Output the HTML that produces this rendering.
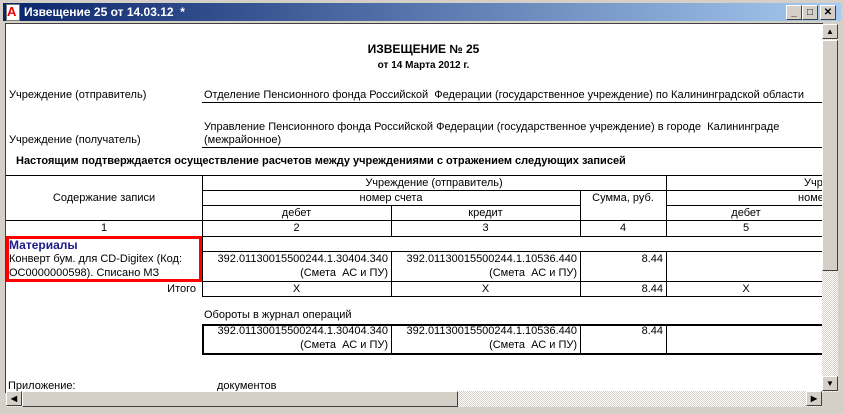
<!DOCTYPE html>
<html><head><meta charset="utf-8"><style>
body{margin:0;width:844px;height:414px;overflow:hidden;background:#D4D0C8;font-family:"Liberation Sans",Arial,sans-serif;font-size:11px;color:#000;position:relative}
.a{position:absolute;white-space:nowrap}
.title{position:absolute;left:3px;top:3px;width:838px;height:18px;background:linear-gradient(90deg,#0A246A,#A6CAF0)}
.content{position:absolute;left:5px;top:23px;width:817px;height:369px;background:#fff;border-left:1px solid #404040;border-top:1px solid #404040;overflow:hidden}
.c{position:absolute;text-align:center}
.r{position:absolute;text-align:right}
.hl{position:absolute;height:1px;background:#000}
.vl{position:absolute;width:1px;background:#000}
.btn{position:absolute;width:14px;height:13px;background:#D4D0C8;border:1px solid;border-color:#fff #404040 #404040 #fff;font-size:10px;text-align:center;line-height:13px;font-weight:bold}
.sb{position:absolute;background:repeating-conic-gradient(#D4D0C8 0 25%,#fff 0 50%) 0 0/2px 2px}
.thumb{position:absolute;background:#D4D0C8;border:1px solid;border-color:#fff #404040 #404040 #fff}
</style></head><body>
<div class="title"></div>
<div class="a" style="left:6px;top:4px;width:12px;height:15px;background:#fff;border:1px solid #777"><span style="color:#e00;font-weight:bold;font-size:13px;position:absolute;left:0;top:-1px">A</span></div>
<div class="a" style="left:24px;top:5px;color:#fff;font-weight:bold;font-size:12px">Извещение 25 от 14.03.12 &nbsp;*</div>
<div class="btn" style="left:786px;top:5px">_</div>
<div class="btn" style="left:802px;top:5px">□</div>
<div class="btn" style="left:820px;top:5px">✕</div>

<div class="content">
<div class="c" style="left:0;width:835px;top:18px;font-weight:bold;font-size:12px">ИЗВЕЩЕНИЕ № 25</div>
<div class="c" style="left:0;width:835px;top:36px;font-weight:bold;font-size:10px">от 14 Марта 2012 г.</div>
<div class="a" style="left:3px;top:65px">Учреждение (отправитель)</div>
<div class="a" style="left:198px;top:65px">Отделение Пенсионного фонда Российской &nbsp;Федерации (государственное учреждение) по Калининградской области</div>
<div class="hl" style="left:196px;width:620px;top:78px"></div>
<div class="a" style="left:198px;top:97px">Управление Пенсионного фонда Российской Федерации (государственное учреждение) в городе &nbsp;Калининграде</div>
<div class="a" style="left:198px;top:110px">(межрайонное)</div>
<div class="a" style="left:3px;top:110px">Учреждение (получатель)</div>
<div class="hl" style="left:196px;width:620px;top:123px"></div>
<div class="a" style="left:10px;top:131px;font-weight:bold">Настоящим подтверждается осуществление расчетов между учреждениями с отражением следующих записей</div>

<div class="hl" style="left:0;width:820px;top:151px"></div>
<div class="hl" style="left:196px;width:620px;top:166px"></div>
<div class="hl" style="left:196px;width:378px;top:181px"></div>
<div class="hl" style="left:660px;width:160px;top:181px"></div>
<div class="hl" style="left:0;width:820px;top:196px"></div>
<div class="hl" style="left:0;width:820px;top:212px"></div>
<div class="hl" style="left:196px;width:620px;top:227px"></div>
<div class="hl" style="left:196px;width:620px;top:257px"></div>
<div class="hl" style="left:196px;width:620px;top:272px"></div>
<div class="vl" style="left:196px;top:151px;height:121px"></div>
<div class="vl" style="left:385px;top:181px;height:31px"></div>
<div class="vl" style="left:385px;top:227px;height:45px"></div>
<div class="vl" style="left:574px;top:166px;height:46px"></div>
<div class="vl" style="left:574px;top:227px;height:45px"></div>
<div class="vl" style="left:660px;top:151px;height:61px"></div>
<div class="vl" style="left:660px;top:227px;height:45px"></div>

<div class="c" style="left:0;width:196px;top:168px">Содержание записи</div>
<div class="c" style="left:196px;width:464px;top:153px">Учреждение (отправитель)</div>
<div class="c" style="left:196px;width:378px;top:168px">номер счета</div>
<div class="c" style="left:196px;width:189px;top:183px">дебет</div>
<div class="c" style="left:385px;width:189px;top:183px">кредит</div>
<div class="c" style="left:574px;width:86px;top:168px">Сумма, руб.</div>
<div class="a" style="left:798px;top:153px">Учр</div>
<div class="a" style="left:792px;top:168px">номе</div>
<div class="c" style="left:660px;width:160px;top:183px">дебет</div>
<div class="c" style="left:0;width:196px;top:198px">1</div>
<div class="c" style="left:196px;width:189px;top:198px">2</div>
<div class="c" style="left:385px;width:189px;top:198px">3</div>
<div class="c" style="left:574px;width:86px;top:198px">4</div>
<div class="c" style="left:660px;width:160px;top:198px">5</div>

<div class="a" style="left:0;top:212px;width:196px;height:46px;border:3px solid #f00;box-sizing:border-box"></div>
<div class="a" style="left:3px;top:214px;color:#1a1a8c;font-weight:bold;font-size:12px">Материалы</div>
<div class="a" style="left:3px;top:229px">Конверт бум. для CD-Digitex (Код:</div>
<div class="a" style="left:3px;top:243px">ОС0000000598). Списано МЗ</div>
<div class="r" style="left:196px;width:186px;top:229px">392.01130015500244.1.30404.340</div>
<div class="r" style="left:196px;width:186px;top:243px">(Смета &nbsp;АС и ПУ)</div>
<div class="r" style="left:385px;width:186px;top:229px">392.01130015500244.1.10536.440</div>
<div class="r" style="left:385px;width:186px;top:243px">(Смета &nbsp;АС и ПУ)</div>
<div class="r" style="left:574px;width:83px;top:229px">8.44</div>
<div class="r" style="left:0;width:190px;top:259px">Итого</div>
<div class="c" style="left:196px;width:189px;top:259px">X</div>
<div class="c" style="left:385px;width:189px;top:259px">X</div>
<div class="r" style="left:574px;width:83px;top:259px">8.44</div>
<div class="c" style="left:660px;width:160px;top:259px">X</div>

<div class="a" style="left:198px;top:285px">Обороты в журнал операций</div>
<div class="a" style="left:196px;top:300px;width:630px;height:31px;border:2px solid #000;box-sizing:border-box"></div>
<div class="vl" style="left:385px;top:300px;height:31px"></div>
<div class="vl" style="left:574px;top:300px;height:31px"></div>
<div class="vl" style="left:660px;top:300px;height:31px"></div>
<div class="r" style="left:196px;width:186px;top:301px">392.01130015500244.1.30404.340</div>
<div class="r" style="left:196px;width:186px;top:315px">(Смета &nbsp;АС и ПУ)</div>
<div class="r" style="left:385px;width:186px;top:301px">392.01130015500244.1.10536.440</div>
<div class="r" style="left:385px;width:186px;top:315px">(Смета &nbsp;АС и ПУ)</div>
<div class="r" style="left:574px;width:83px;top:301px">8.44</div>
<div class="a" style="left:2px;top:356px">Приложение:</div>
<div class="a" style="left:211px;top:356px">документов</div>
</div>

<div class="sb" style="left:822px;top:24px;width:16px;height:368px"></div>
<div class="btn" style="left:822px;top:24px;font-size:8px">▲</div>
<div class="thumb" style="left:822px;top:40px;width:14px;height:229px"></div>
<div class="btn" style="left:822px;top:376px;font-size:8px">▼</div>
<div class="sb" style="left:6px;top:391px;width:816px;height:16px"></div>
<div class="btn" style="left:6px;top:391px;font-size:8px">◀</div>
<div class="thumb" style="left:22px;top:391px;width:434px;height:14px"></div>
<div class="btn" style="left:806px;top:391px;font-size:8px">▶</div>
</body></html>
